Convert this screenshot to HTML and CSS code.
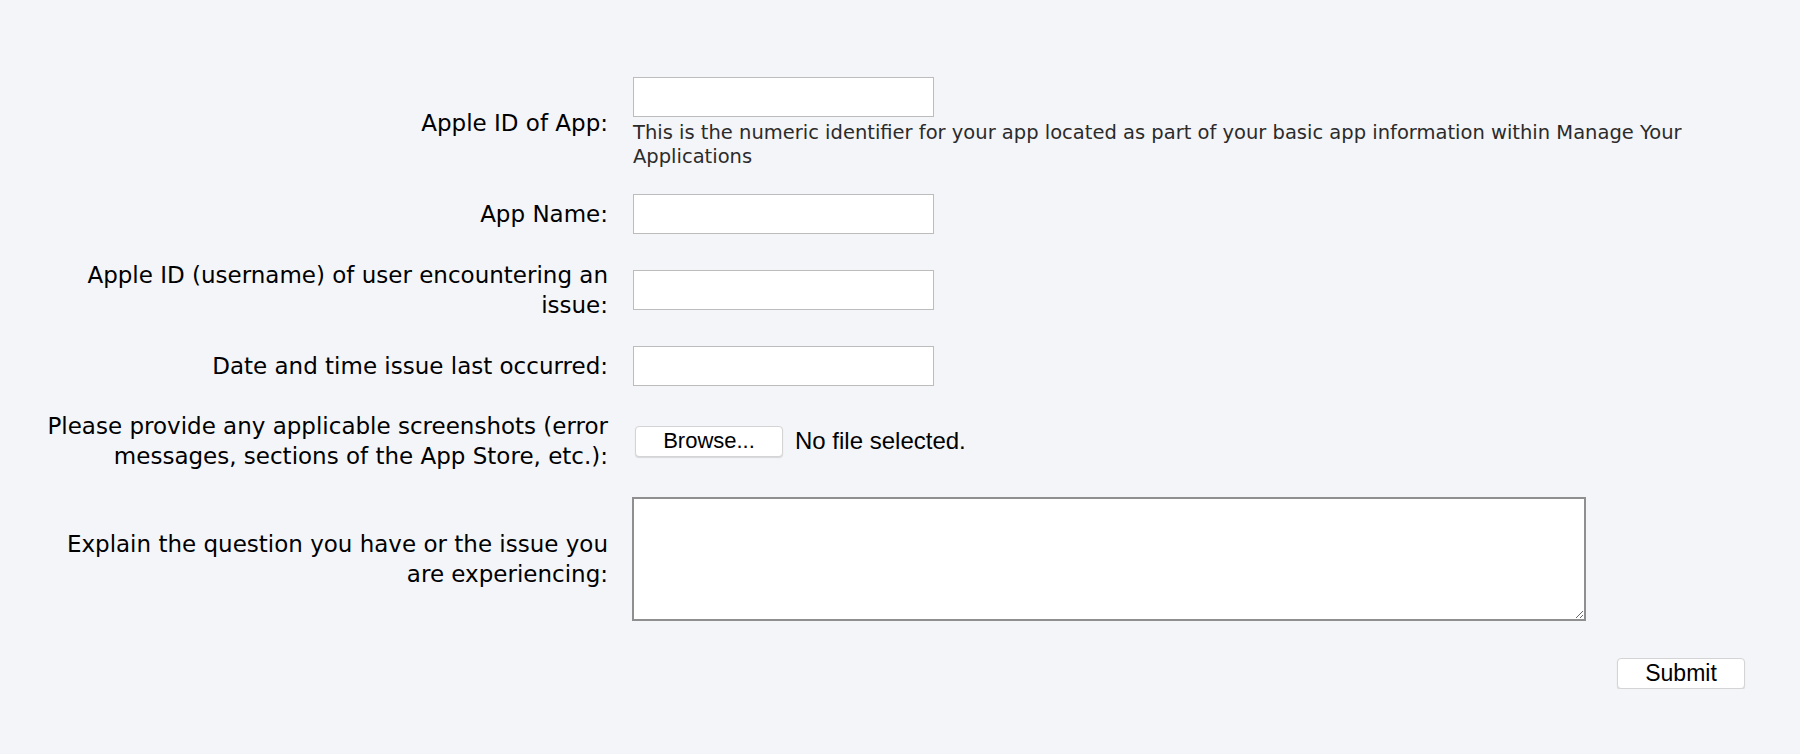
FILE: index.html
```html
<!DOCTYPE html>
<html>
<head>
<meta charset="utf-8">
<link rel="stylesheet" href="styles.css">
</head>
<body>
<form class="form">
  <div class="row first">
    <label class="label">Apple ID of App:</label>
    <div class="field">
      <input class="text" type="text">
      <div class="help">This is the numeric identifier for your app located as part of your basic app information within Manage Your Applications</div>
    </div>
  </div>
  <div class="row">
    <label class="label">App Name:</label>
    <div class="field"><input class="text" type="text"></div>
  </div>
  <div class="row">
    <label class="label">Apple ID (username) of user encountering an issue:</label>
    <div class="field"><input class="text" type="text"></div>
  </div>
  <div class="row tight">
    <label class="label">Date and time issue last occurred:</label>
    <div class="field"><input class="text" type="text"></div>
  </div>
  <div class="row">
    <label class="label">Please provide any applicable screenshots (error messages, sections of the App Store, etc.):</label>
    <div class="field file">
      <button type="button" class="btn browse">Browse...</button>
      <span class="nofile">No file selected.</span>
    </div>
  </div>
  <div class="row">
    <label class="label">Explain the question you have or the issue you are experiencing:</label>
    <div class="field"><textarea class="area"></textarea></div>
  </div>
  <div class="actions">
    <button type="button" class="btn submit">Submit</button>
  </div>
</form>
</body>
</html>
```
FILE: styles.css
```css
html, body {
  margin: 0;
  padding: 0;
  background: #f4f5f9;
}
body {
  font-family: "DejaVu Sans", sans-serif;
  color: #000;
}
.form {
  width: 1712px;
  margin-left: 33px;
  padding-top: 77px;
  display: flex;
  flex-direction: column;
  gap: 26px;
}
.row {
  display: grid;
  grid-template-columns: 575px 1fr;
  column-gap: 25px;
  align-items: center;
}
.row.first {
  margin-bottom: -1px;
}
.row.tight {
  margin-bottom: -1px;
}
.label {
  text-align: right;
  font-size: 23px;
  line-height: 30px;
  color: #000;
}
.field {
  display: flex;
  flex-direction: column;
  align-items: flex-start;
}
.text {
  box-sizing: border-box;
  width: 301px;
  height: 40px;
  margin: 0;
  border: 1px solid #bcbcbc;
  background: #fff;
  border-radius: 0;
  padding: 0 6px;
  font-size: 18px;
  outline: none;
}
.help {
  margin-top: 4px;
  font-size: 19.5px;
  line-height: 24px;
  color: #2b2b2b;
  padding-right: 20px;
}
.file {
  flex-direction: row;
  align-items: center;
  gap: 12px;
  padding-left: 2px;
}
.btn {
  box-sizing: border-box;
  height: 31px;
  margin: 0;
  background: #fff;
  border: 1px solid #d4d4d4;
  border-radius: 4px;
  box-shadow: 0 1px 1px rgba(0,0,0,0.12);
  font-family: "Liberation Sans", sans-serif;
  font-size: 23px;
  color: #000;
  padding: 0;
}
.browse {
  width: 148px;
  font-size: 22px;
}
.nofile {
  font-family: "Liberation Sans", sans-serif;
  font-size: 24px;
  color: #000;
}
.area {
  box-sizing: border-box;
  width: 954px;
  height: 124px;
  margin: 0 0 0 -1px;
  border: 2px solid #8f8f8f;
  background: #fff;
  border-radius: 0;
  outline: none;
}
.actions {
  display: flex;
  justify-content: flex-end;
  margin-top: 11px;
}
.submit {
  width: 128px;
}
```
